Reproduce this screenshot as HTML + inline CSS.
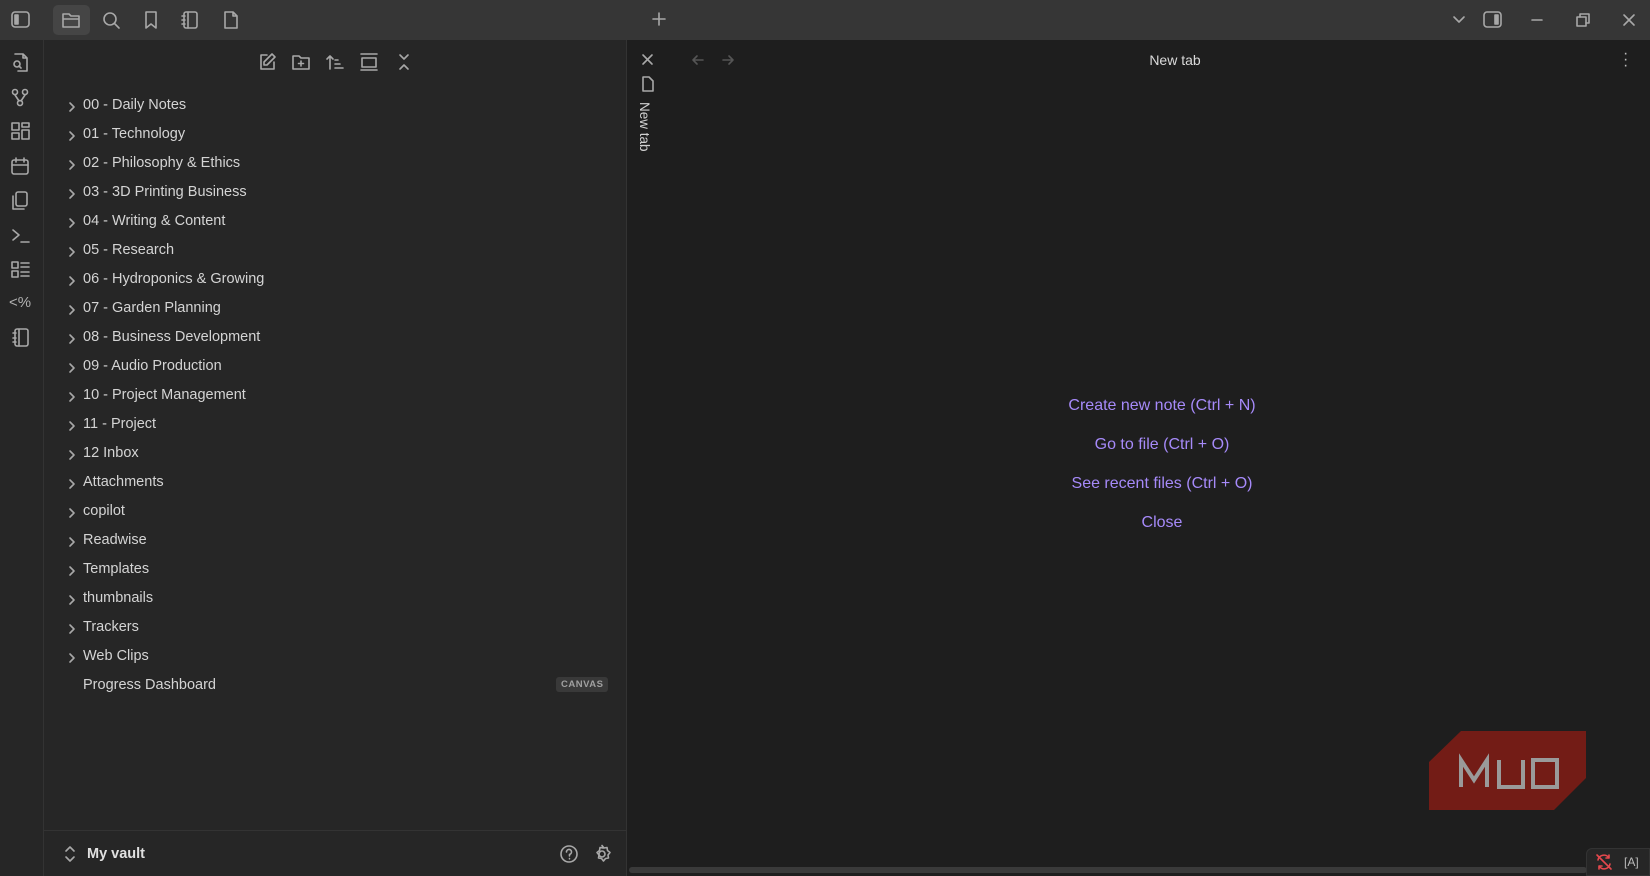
<!DOCTYPE html>
<html><head><style>
*{margin:0;padding:0;box-sizing:border-box}
body{width:1650px;height:876px;background:#1e1e1e;font-family:"Liberation Sans",sans-serif;color:#dadada;position:relative;overflow:hidden}
.abs{position:absolute}
svg{fill:none;stroke:#a8a8a8;stroke-width:1.6;stroke-linecap:round;stroke-linejoin:round}
.row{position:absolute;left:83px;font-size:14.5px;color:#d4d4d4;white-space:nowrap}
.chev{position:absolute;left:-16px;top:4px}
.link{position:absolute;width:400px;left:962px;text-align:center;color:#a68af9;font-size:16px}
</style></head><body>
<div class="abs" style="left:0;top:0;width:1650px;height:40px;background:#363636"></div>
<div class="abs" style="left:53px;top:5px;width:37px;height:30px;background:#454545;border-radius:5px"></div>
<svg class="abs" style="left:10px;top:9px" width="22" height="22"><rect x="2" y="3" width="17" height="15" rx="3"/><rect x="5" y="6" width="3" height="9" fill="#a8a8a8"/></svg>
<svg class="abs" style="left:60px;top:9px" width="22" height="22"><path d="M3 5h6l2 2h8v11H3z M3 10h16"/></svg>
<svg class="abs" style="left:100px;top:9px" width="22" height="22"><circle cx="10" cy="10" r="6"/><path d="M15 15l4 4"/></svg>
<svg class="abs" style="left:140px;top:9px" width="22" height="22"><path d="M6 3h10v16l-5-4-5 4z"/></svg>
<svg class="abs" style="left:179px;top:9px" width="22" height="22"><rect x="5" y="3" width="13" height="16" rx="2"/><path d="M9 3v16M3 7h3M3 11h3M3 15h3"/></svg>
<svg class="abs" style="left:220px;top:9px" width="22" height="22"><path d="M5 3h8l4 4v12H5z M13 3v4h4"/></svg>
<svg class="abs" style="left:648px;top:8px" width="22" height="22"><path d="M11 5v12M5 11h12"/></svg>
<svg class="abs" style="left:1448px;top:9px" width="22" height="22"><path d="M6 8l5 5 5-5"/></svg>
<svg class="abs" style="left:1482px;top:9px" width="22" height="22"><rect x="2" y="3" width="17" height="15" rx="3"/><rect x="13" y="6" width="3" height="9" fill="#a8a8a8"/></svg>
<svg class="abs" style="left:1526px;top:9px" width="22" height="22"><path d="M6 11h10"/></svg>
<svg class="abs" style="left:1572px;top:9px" width="22" height="22"><rect x="5" y="8" width="9" height="9"/><path d="M8 8V5h9v9h-3"/></svg>
<svg class="abs" style="left:1618px;top:9px" width="22" height="22"><path d="M6 6l10 10M16 6L6 16"/></svg>

<div class="abs" style="left:0;top:40px;width:44px;height:836px;background:#262626;border-right:1px solid #333"></div>
<div class="abs" style="left:44px;top:40px;width:583px;height:836px;background:#262626;border-right:1px solid #333"></div>
<svg class="abs" style="left:9px;top:51px" width="24" height="24"><path d="M6 3h8l4 4v13H9M14 3v4h4"/><circle cx="8" cy="13" r="3"/><path d="M10 15l2 2"/></svg>
<svg class="abs" style="left:9px;top:86px" width="24" height="24"><circle cx="6" cy="6" r="2.5"/><circle cx="16" cy="6" r="2.5"/><circle cx="11" cy="17" r="2.5"/><path d="M6 9l4 6M16 9l-4 6"/></svg>
<svg class="abs" style="left:9px;top:120px" width="24" height="24"><rect x="3" y="3" width="7" height="7"/><rect x="13" y="3" width="7" height="4"/><rect x="3" y="13" width="7" height="6"/><rect x="13" y="10" width="7" height="9"/></svg>
<svg class="abs" style="left:9px;top:155px" width="24" height="24"><rect x="3" y="5" width="16" height="14" rx="2"/><path d="M3 10h16M7 3v4M15 3v4"/></svg>
<svg class="abs" style="left:9px;top:189px" width="24" height="24"><rect x="7" y="3" width="11" height="14" rx="2"/><path d="M4 7v13h11"/></svg>
<svg class="abs" style="left:9px;top:224px" width="24" height="24"><path d="M4 6l6 5-6 5M12 18h8"/></svg>
<svg class="abs" style="left:9px;top:258px" width="24" height="24"><rect x="3" y="4" width="6" height="6"/><rect x="3" y="13" width="6" height="6"/><path d="M12 5h8M12 9h8M12 14h8M12 18h8"/></svg>
<div class="abs" style="left:9px;top:294px;font-size:15px;color:#b0b0b0">&lt;%</div>
<svg class="abs" style="left:9px;top:326px" width="24" height="24"><rect x="6" y="3" width="13" height="17" rx="2"/><path d="M10 3v17M4 7h3M4 12h3M4 16h3"/></svg>

<svg class="abs" style="left:256px;top:51px" width="22" height="22"><path d="M11 4H5v14h13v-7M16 3l3 3-8 8H8v-3z"/></svg>
<svg class="abs" style="left:290px;top:51px" width="22" height="22"><path d="M3 5h6l2 2h8v11H3z M11 10v5M8.5 12.5h5"/></svg>
<svg class="abs" style="left:324px;top:51px" width="22" height="22"><path d="M6 18V5M3 8l3-3 3 3M11 9h3M11 13h5M11 17h8"/></svg>
<svg class="abs" style="left:358px;top:51px" width="22" height="22"><path d="M3 3h16M3 19h16"/><rect x="4" y="7" width="14" height="9"/></svg>
<svg class="abs" style="left:393px;top:51px" width="22" height="22"><path d="M7 4l4 4 4-4M7 18l4-4 4 4"/></svg>

<div class="row" style="top:97px"><svg class="chev" width="10" height="12"><path d="M3 2l4 4-4 4"/></svg>00 - Daily Notes</div>
<div class="row" style="top:126px"><svg class="chev" width="10" height="12"><path d="M3 2l4 4-4 4"/></svg>01 - Technology</div>
<div class="row" style="top:155px"><svg class="chev" width="10" height="12"><path d="M3 2l4 4-4 4"/></svg>02 - Philosophy &amp; Ethics</div>
<div class="row" style="top:184px"><svg class="chev" width="10" height="12"><path d="M3 2l4 4-4 4"/></svg>03 - 3D Printing Business</div>
<div class="row" style="top:213px"><svg class="chev" width="10" height="12"><path d="M3 2l4 4-4 4"/></svg>04 - Writing &amp; Content</div>
<div class="row" style="top:242px"><svg class="chev" width="10" height="12"><path d="M3 2l4 4-4 4"/></svg>05 - Research</div>
<div class="row" style="top:271px"><svg class="chev" width="10" height="12"><path d="M3 2l4 4-4 4"/></svg>06 - Hydroponics &amp; Growing</div>
<div class="row" style="top:300px"><svg class="chev" width="10" height="12"><path d="M3 2l4 4-4 4"/></svg>07 - Garden Planning</div>
<div class="row" style="top:329px"><svg class="chev" width="10" height="12"><path d="M3 2l4 4-4 4"/></svg>08 - Business Development</div>
<div class="row" style="top:358px"><svg class="chev" width="10" height="12"><path d="M3 2l4 4-4 4"/></svg>09 - Audio Production</div>
<div class="row" style="top:387px"><svg class="chev" width="10" height="12"><path d="M3 2l4 4-4 4"/></svg>10 - Project Management</div>
<div class="row" style="top:416px"><svg class="chev" width="10" height="12"><path d="M3 2l4 4-4 4"/></svg>11 - Project</div>
<div class="row" style="top:445px"><svg class="chev" width="10" height="12"><path d="M3 2l4 4-4 4"/></svg>12 Inbox</div>
<div class="row" style="top:474px"><svg class="chev" width="10" height="12"><path d="M3 2l4 4-4 4"/></svg>Attachments</div>
<div class="row" style="top:503px"><svg class="chev" width="10" height="12"><path d="M3 2l4 4-4 4"/></svg>copilot</div>
<div class="row" style="top:532px"><svg class="chev" width="10" height="12"><path d="M3 2l4 4-4 4"/></svg>Readwise</div>
<div class="row" style="top:561px"><svg class="chev" width="10" height="12"><path d="M3 2l4 4-4 4"/></svg>Templates</div>
<div class="row" style="top:590px"><svg class="chev" width="10" height="12"><path d="M3 2l4 4-4 4"/></svg>thumbnails</div>
<div class="row" style="top:619px"><svg class="chev" width="10" height="12"><path d="M3 2l4 4-4 4"/></svg>Trackers</div>
<div class="row" style="top:648px"><svg class="chev" width="10" height="12"><path d="M3 2l4 4-4 4"/></svg>Web Clips</div>
<div class="row" style="top:677px">Progress Dashboard</div>
<div class="abs" style="left:556px;top:677px;background:#393939;color:#a0a0a0;font-size:9.5px;font-weight:bold;padding:2px 5px;border-radius:3px;letter-spacing:.5px">CANVAS</div>

<div class="abs" style="left:44px;top:830px;width:583px;height:1px;background:#333"></div>
<svg class="abs" style="left:62px;top:845px" width="16" height="18"><path d="M4 6l4-4 4 4M4 12l4 4 4-4"/></svg>
<div class="abs" style="left:87px;top:846px;font-size:14.5px;font-weight:bold;color:#e0e0e0">My vault</div>
<svg class="abs" style="left:558px;top:843px" width="22" height="22"><circle cx="11" cy="11" r="8"/><path d="M8.5 9a2.5 2.5 0 1 1 3 2.4v1.5M11.5 15.5v.3"/></svg>
<svg class="abs" style="left:591px;top:843px" width="22" height="22"><circle cx="11" cy="11" r="3"/><path d="M11 2.5l2 2.5 3-.5.5 3 2.5 2-2 2.5.5 3-3 .5-2 2.5-2-2.5-3-.5.5-3-2-2.5 2.5-2 .5-3 3 .5z"/></svg>

<svg class="abs" style="left:638px;top:50px" width="20" height="20"><path d="M5 5l9 9M14 5l-9 9"/></svg>
<svg class="abs" style="left:640px;top:75px" width="16" height="18"><path d="M3 2h6l4 4v10H3z"/></svg>
<div class="abs" style="left:637px;top:102px;font-size:13.5px;color:#d0d0d0;writing-mode:vertical-rl">New tab</div>
<svg class="abs" style="left:688px;top:50px" width="20" height="20"><path d="M15 10H5M9 6l-4 4 4 4" stroke="#555"/></svg>
<svg class="abs" style="left:718px;top:50px" width="20" height="20"><path d="M5 10h10M11 6l4 4-4 4" stroke="#555"/></svg>
<div class="abs" style="left:1100px;width:150px;text-align:center;top:52px;font-size:14px;color:#dadada">New tab</div>
<div class="abs" style="left:1623px;top:51px;color:#bbb;font-size:16px;line-height:6px">·<br>·<br>·</div>

<div class="link" style="top:397px">Create new note (Ctrl + N)</div>
<div class="link" style="top:436px">Go to file (Ctrl + O)</div>
<div class="link" style="top:475px">See recent files (Ctrl + O)</div>
<div class="link" style="top:514px">Close</div>

<svg class="abs" style="left:1429px;top:731px" width="158" height="80"><polygon points="32,0 157,0 157,47 125,79 0,79 0,31" fill="#731c16" stroke="none"/><path d="M157 55 L133 79" stroke="#1e1e1e" stroke-width="5"/><path d="M32 56V29l13 20 13-20v27M70 29v27h24V29M104 29h24v27h-24z" stroke="#9a9a9a" stroke-width="4" stroke-linecap="butt" stroke-linejoin="miter"/></svg>

<div class="abs" style="left:629px;top:867px;width:958px;height:6px;background:#3a3a3a;border-radius:3px"></div>
<div class="abs" style="left:1586px;top:848px;width:64px;height:28px;background:#262626;border:1px solid #333;border-radius:6px 0 0 0"></div>
<svg class="abs" style="left:1594px;top:852px" width="20" height="20"><path d="M4 8a6 6 0 0 1 11-2M16 12a6 6 0 0 1-11 2M15 3v3h-3M5 17v-3h3M3 3l14 14" stroke="#e5484d"/></svg>
<div class="abs" style="left:1624px;top:855px;font-size:12px;color:#bbb">[A]</div>
</body></html>
